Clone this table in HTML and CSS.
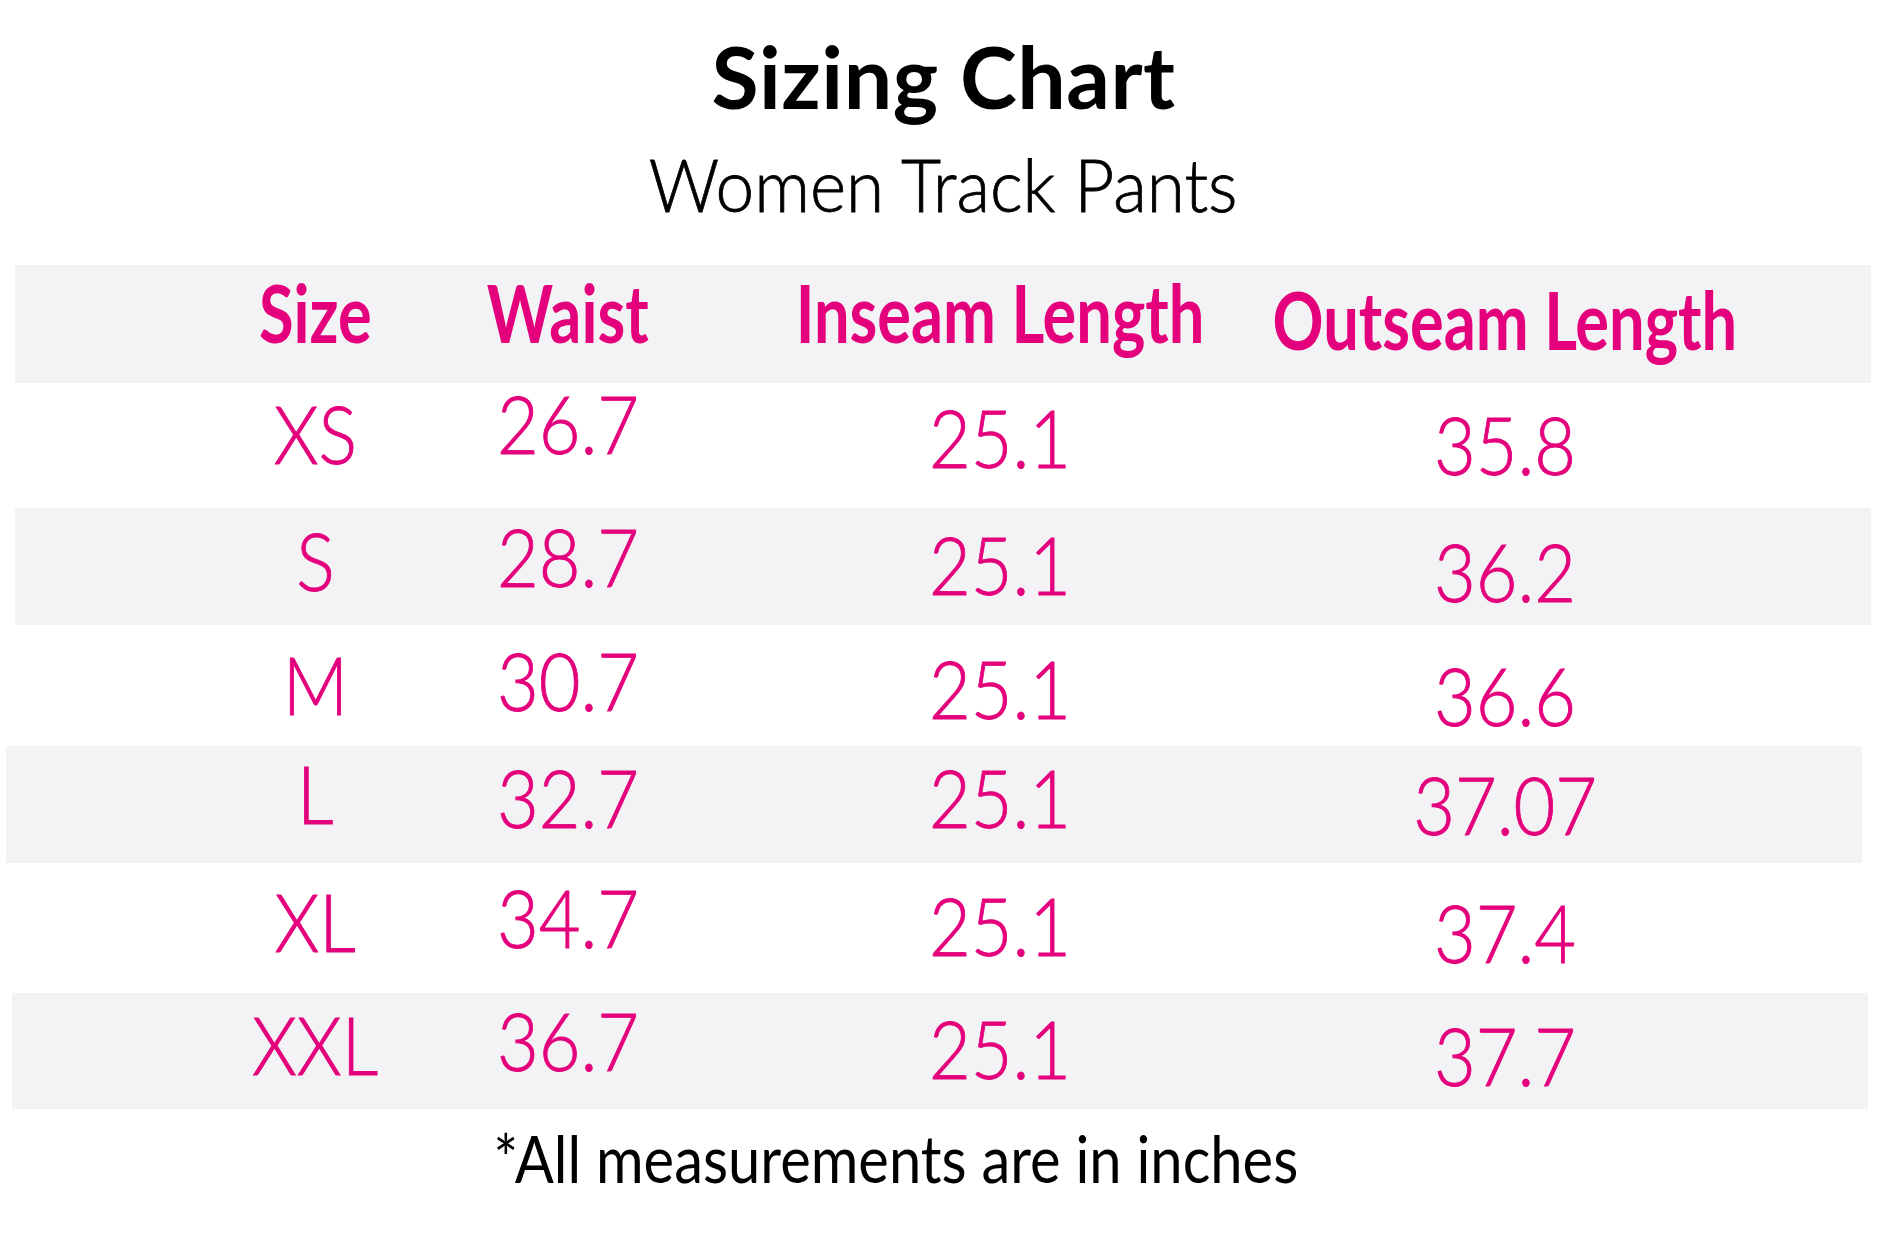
FILE: index.html
```html
<!DOCTYPE html>
<html lang="en">
<head>
<meta charset="utf-8">
<title>Sizing Chart</title>
<link rel="stylesheet" href="styles.css">
</head>
<body>
<main class="page">
  <h1 class="title">Sizing Chart</h1>
  <p class="subtitle"><span class="narrow">Women Track Pants</span></p>

  <div class="chart">
    <div class="row head shade shade-a">
      <div class="cell c1"><span class="cond">Size</span></div>
      <div class="cell c2"><span class="cond">Waist</span></div>
      <div class="cell c3"><span class="cond">Inseam Length</span></div>
      <div class="cell c4"><span class="cond">Outseam Length</span></div>
    </div>
    <div class="row h-xs">
      <div class="cell c1"><span class="val">XS</span></div>
      <div class="cell c2 lift"><span class="val">26.7</span></div>
      <div class="cell c3"><span class="val">25.1</span></div>
      <div class="cell c4"><span class="val">35.8</span></div>
    </div>
    <div class="row h-s shade shade-a">
      <div class="cell c1"><span class="val">S</span></div>
      <div class="cell c2"><span class="val">28.7</span></div>
      <div class="cell c3"><span class="val">25.1</span></div>
      <div class="cell c4"><span class="val">36.2</span></div>
    </div>
    <div class="row h-m">
      <div class="cell c1"><span class="val">M</span></div>
      <div class="cell c2"><span class="val">30.7</span></div>
      <div class="cell c3"><span class="val">25.1</span></div>
      <div class="cell c4"><span class="val">36.6</span></div>
    </div>
    <div class="row h-l shade shade-b">
      <div class="cell c1"><span class="val">L</span></div>
      <div class="cell c2 sink"><span class="val">32.7</span></div>
      <div class="cell c3"><span class="val">25.1</span></div>
      <div class="cell c4"><span class="val">37.07</span></div>
    </div>
    <div class="row h-xl">
      <div class="cell c1"><span class="val">XL</span></div>
      <div class="cell c2"><span class="val">34.7</span></div>
      <div class="cell c3"><span class="val">25.1</span></div>
      <div class="cell c4"><span class="val">37.4</span></div>
    </div>
    <div class="row h-xxl shade shade-c">
      <div class="cell c1"><span class="val">XXL</span></div>
      <div class="cell c2"><span class="val">36.7</span></div>
      <div class="cell c3"><span class="val">25.1</span></div>
      <div class="cell c4"><span class="val">37.7</span></div>
    </div>
  </div>

  <p class="note"><span class="narrow-note">*All measurements are in inches</span></p>
</main>
</body>
</html>
```

FILE: styles.css
```css
html, body {
  margin: 0;
  padding: 0;
  background: #ffffff;
}

body {
  font-family: Lato, "Open Sans", "Liberation Sans", sans-serif;
  color: #000000;
}

.page {
  width: 1887px;
  padding-top: 26px;
}

.title {
  margin: 0;
  text-align: center;
  font-size: 86px;
  line-height: 100px;
  font-weight: 700;
  letter-spacing: 0.5px;
}

.subtitle {
  margin: 15px 0 0;
  text-align: center;
  font-size: 72px;
  line-height: 86px;
  font-weight: 300;
  -webkit-text-stroke: 0.8px currentColor;
}

.narrow {
  display: inline-block;
  transform: scaleX(0.962);
}

.narrow-note {
  display: inline-block;
  transform: scaleX(0.877);
}

.chart {
  margin-top: 38px;
  color: #e4007c;
}

.row {
  --x: 0px;
  box-sizing: border-box;
  display: grid;
  grid-template-columns: 146px 360px 504px 506px;
  align-items: center;
  margin-left: var(--x);
  padding-left: calc(242px - var(--x));
  width: 1856px;
}

.shade {
  background: #f3f3f5;
}

.shade-a { --x: 15px; }
.shade-b { --x: 6px; }
.shade-c { --x: 12px; }

.cell {
  display: flex;
  justify-content: center;
  white-space: nowrap;
  font-size: 80px;
  line-height: 80px;
  font-weight: 300;
  -webkit-text-stroke: 0.9px currentColor;
}

.val {
  display: inline-block;
  transform: scaleX(0.9);
}

.c1 { padding-bottom: 14px; }
.c2 { padding-bottom: 22px; }
.c3 { padding-bottom: 6px; }
.c4 { padding-top: 8px; }

.c2.lift { padding-bottom: 34px; }
.c2.sink { padding-bottom: 6px; }

.head {
  height: 118px;
  align-items: start;
}

.head .cell {
  font-size: 81px;
  line-height: 81px;
  font-weight: 700;
  -webkit-text-stroke: 0;
  padding: 6px 0 0;
}

.head .c4 {
  padding-top: 13px;
}

.cond {
  display: inline-block;
  transform: scaleX(0.78);
}

.h-xs { height: 125px; padding-bottom: 11px; }
.h-s { height: 117px; }
.h-m { height: 121px; padding-top: 10px; }
.h-l { height: 117px; padding-bottom: 9px; }
.h-xl { height: 130px; }
.h-xxl { height: 116px; }

.note {
  margin: 16px 0 0;
  padding-right: 96px;
  text-align: center;
  font-size: 66px;
  line-height: 66px;
  font-weight: 400;
}
```
